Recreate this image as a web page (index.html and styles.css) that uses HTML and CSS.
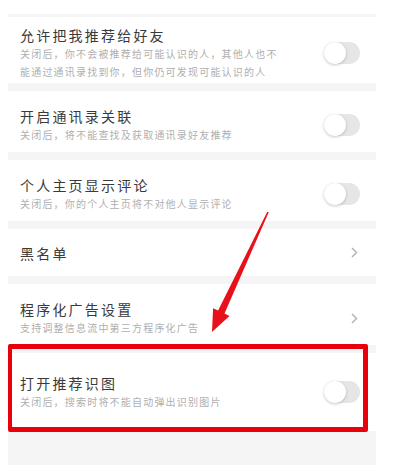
FILE: index.html
```html
<!DOCTYPE html>
<html lang="zh-CN">
<head>
<meta charset="utf-8">
<title>隐私设置</title>
<link rel="stylesheet" href="styles.css">
</head>
<body>
<div class="page">
  <div class="list">
    <div class="row row-first">
      <div class="text">
        <div class="title">允许把我推荐给好友</div>
        <div class="desc">关闭后，你不会被推荐给可能认识的人，其他人也不<br>能通过通讯录找到你，但你仍可发现可能认识的人</div>
      </div>
      <div class="toggle"><span class="knob"></span></div>
    </div>
    <div class="row">
      <div class="text">
        <div class="title">开启通讯录关联</div>
        <div class="desc">关闭后，将不能查找及获取通讯录好友推荐</div>
      </div>
      <div class="toggle"><span class="knob"></span></div>
    </div>
    <div class="row">
      <div class="text">
        <div class="title">个人主页显示评论</div>
        <div class="desc">关闭后，你的个人主页将不对他人显示评论</div>
      </div>
      <div class="toggle"><span class="knob"></span></div>
    </div>
    <div class="row row-link">
      <div class="text">
        <div class="title">黑名单</div>
      </div>
      <svg class="chev" width="7" height="11" viewBox="0 0 7 11"><polyline points="1,1 5.5,5.5 1,10" fill="none" stroke="#b5b5b5" stroke-width="1.5"/></svg>
    </div>
    <div class="row">
      <div class="text">
        <div class="title">程序化广告设置</div>
        <div class="desc">支持调整信息流中第三方程序化广告</div>
      </div>
      <svg class="chev" width="7" height="11" viewBox="0 0 7 11"><polyline points="1,1 5.5,5.5 1,10" fill="none" stroke="#b5b5b5" stroke-width="1.5"/></svg>
    </div>
    <div class="row row-last">
      <div class="text">
        <div class="title">打开推荐识图</div>
        <div class="desc">关闭后，搜索时将不能自动弹出识别图片</div>
      </div>
      <div class="toggle"><span class="knob"></span></div>
    </div>
  </div>
  <div class="highlight"></div>
  <svg class="arrow" width="400" height="465" viewBox="0 0 400 465">
    <polygon points="267.3,211.7 268.7,212.3 224.5,313.6 229.5,315.9 212,332 213.1,308.3 218.1,310.6" fill="#e8101a"/>
  </svg>
</div>
</body>
</html>
```

FILE: styles.css
```css
* { box-sizing: border-box; }
html, body {
  margin: 0;
  padding: 0;
  background: #ffffff;
}
body {
  font-family: "Noto Sans CJK SC", "Noto Sans", sans-serif;
  width: 400px;
  height: 465px;
  overflow: hidden;
}
.page {
  position: relative;
  width: 400px;
  height: 465px;
  padding-top: 14px;
}
.list {
  margin-left: 8px;
  width: 368px;
  height: 451px;
  background: #f5f5f5;
  padding-top: 3px;
  display: flex;
  flex-direction: column;
  gap: 8px;
}
.row {
  background: #ffffff;
  display: flex;
  align-items: center;
  justify-content: space-between;
  padding: 15px 16px 8px 12px;
}
.row-first {
  padding-top: 8px;
  padding-bottom: 2px;
  height: 66px;
}
.row-link {
  padding-top: 0;
  padding-bottom: 0;
  height: 47px;
}
.row-last {
  padding-top: 20px;
  padding-bottom: 20px;
}
.text {
  display: flex;
  flex-direction: column;
}
.title {
  font-size: 14px;
  line-height: 20px;
  letter-spacing: 2.2px;
  color: #3a3a3a;
}
.desc {
  font-size: 10px;
  line-height: 18px;
  letter-spacing: 1.2px;
  color: #afafaf;
}
.toggle {
  width: 36px;
  height: 22px;
  border-radius: 11px;
  background: #e6e6e6;
  position: relative;
  flex-shrink: 0;
}
.knob {
  position: absolute;
  left: 0;
  top: 0;
  width: 22px;
  height: 22px;
  border-radius: 50%;
  background: #ffffff;
  box-shadow: 0 1px 3px rgba(0, 0, 0, 0.22);
}
.chev {
  flex-shrink: 0;
  margin-right: 2px;
}
.highlight {
  position: absolute;
  left: 8px;
  top: 344px;
  width: 360px;
  height: 88px;
  border: 5px solid #e8000b;
  border-left-width: 4px;
  border-radius: 2px;
}
.arrow {
  position: absolute;
  left: 0;
  top: 0;
}
```
